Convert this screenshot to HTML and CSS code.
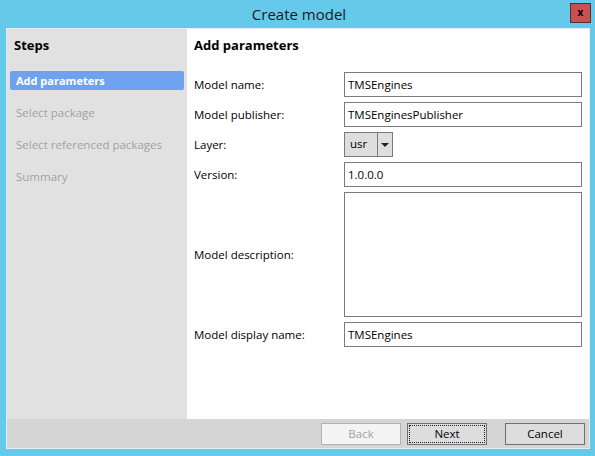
FILE: index.html
```html
<!DOCTYPE html>
<html lang="en">

<head>
    <meta charset="UTF-8">
    <title>Create model</title>
    <link rel="stylesheet" href="styles.css">
</head>

<body>
    <div class="window">
        <!-- Title bar -->
        <div class="titlebar">
            <span class="title">Create model</span>
            <div class="close">x</div>
        </div>

        <div class="frame">
            <div class="main">
                <!-- Steps -->
                <div class="steps">
                    <div class="steps-title">Steps</div>
                    <div class="step active">Add parameters</div>
                    <div class="step">Select package</div>
                    <div class="step">Select referenced packages</div>
                    <div class="step">Summary</div>
                </div>

                <!-- Parameters -->
                <div class="content">
                    <div class="content-title">Add parameters</div>
                    <div class="form">
                        <div class="row">
                            <label>Model name:</label>
                            <div class="field">TMSEngines</div>
                        </div>
                        <div class="row">
                            <label>Model publisher:</label>
                            <div class="field">TMSEnginesPublisher</div>
                        </div>
                        <div class="row">
                            <label>Layer:</label>
                            <div class="combo">
                                <span class="combo-value">usr</span>
                                <span class="combo-arrow"></span>
                            </div>
                        </div>
                        <div class="row">
                            <label>Version:</label>
                            <div class="field">1.0.0.0</div>
                        </div>
                        <div class="row tall">
                            <label>Model description:</label>
                            <div class="field area"></div>
                        </div>
                        <div class="row">
                            <label>Model display name:</label>
                            <div class="field">TMSEngines</div>
                        </div>
                    </div>
                </div>
            </div>

            <!-- Buttons -->
            <div class="footer">
                <div class="btn disabled">Back</div>
                <div class="btn focused"><span>Next</span></div>
                <div class="btn">Cancel</div>
            </div>
        </div>
    </div>
</body>

</html>
```

FILE: styles.css
```css
/* General styles */
body {
    margin: 0;
    font-family: "Open Sans", "Noto Sans", sans-serif;
    font-size: 11.5px;
    color: #000;
}

.window {
    width: 595px;
    height: 456px;
    background: #65c9ea;
    display: flex;
    flex-direction: column;
    box-sizing: border-box;
    padding: 0 5px 7px 6px;
}

/* Title bar */
.titlebar {
    height: 28px;
    position: relative;
    display: flex;
    align-items: center;
    justify-content: center;
}

.title {
    font-size: 15px;
    color: #1b1b1b;
    margin-left: 2px;
}

.close {
    position: absolute;
    top: 3px;
    right: -1px;
    width: 19px;
    height: 18px;
    background: #c75050;
    border: 1px solid #5a2c2c;
    color: #000;
    font-weight: bold;
    font-size: 10px;
    line-height: 16px;
    text-align: center;
}

.frame {
    flex: 1;
    border: 1px solid #dfeff5;
    display: flex;
    flex-direction: column;
}

.main {
    flex: 1;
    display: flex;
}

/* Steps */
.steps {
    width: 180px;
    background: #e1e1e1;
    padding: 5px 3px 0 3px;
    box-sizing: border-box;
}

.steps-title {
    font-weight: bold;
    font-size: 13px;
    padding-left: 4px;
    height: 37px;
    line-height: 22px;
}

.step {
    height: 32px;
    line-height: 19px;
    padding-left: 6px;
    color: #a2a2a2;
}

.step.active {
    height: 19px;
    margin-bottom: 13px;
    background: #6fa2ee;
    border-radius: 2px;
    color: #fff;
    font-weight: bold;
    font-size: 11px;
}

/* Content */
.content {
    flex: 1;
    background: #fff;
    padding: 5px 7px 0 7px;
}

.content-title {
    font-weight: bold;
    font-size: 13px;
    height: 38px;
    line-height: 22px;
}

.form {
    display: flex;
    flex-direction: column;
    gap: 5px;
}

.row {
    display: flex;
    align-items: center;
}

.row label {
    width: 150px;
}

.field {
    width: 238px;
    height: 25px;
    box-sizing: border-box;
    border: 1px solid #7a7a7a;
    padding-left: 3px;
    line-height: 23px;
}

.field.area {
    height: 125px;
}

.combo {
    width: 49px;
    height: 25px;
    box-sizing: border-box;
    border: 1px solid #7a7a7a;
    background: #dedede;
    display: flex;
}

.combo-value {
    width: 33px;
    border-right: 1px solid #7a7a7a;
    padding-left: 5px;
    box-sizing: border-box;
    line-height: 22px;
}

.combo-arrow {
    flex: 1;
    display: flex;
    align-items: center;
    justify-content: center;
}

.combo-arrow::after {
    content: "";
    border-left: 4px solid transparent;
    border-right: 4px solid transparent;
    border-top: 4px solid #222;
}

/* Footer */
.footer {
    height: 29px;
    background: #d5d5d5;
    display: flex;
    justify-content: flex-end;
    align-items: center;
    gap: 6px;
    padding-right: 4px;
}

.btn {
    width: 80px;
    height: 22px;
    box-sizing: border-box;
    border: 1px solid #707070;
    background: #dddddd;
    display: flex;
    align-items: center;
    justify-content: center;
}

.btn + .btn {
    margin-left: 12px;
}

.btn.disabled + .btn {
    margin-left: 0;
}

.btn.disabled {
    background: #f4f4f4;
    border-color: #adb2b5;
    color: #a0a0a0;
}

.btn.focused {
    padding: 1px;
}

.btn.focused span {
    flex: 1;
    align-self: stretch;
    border: 1px dotted #222;
    text-align: center;
    line-height: 16px;
}
```
